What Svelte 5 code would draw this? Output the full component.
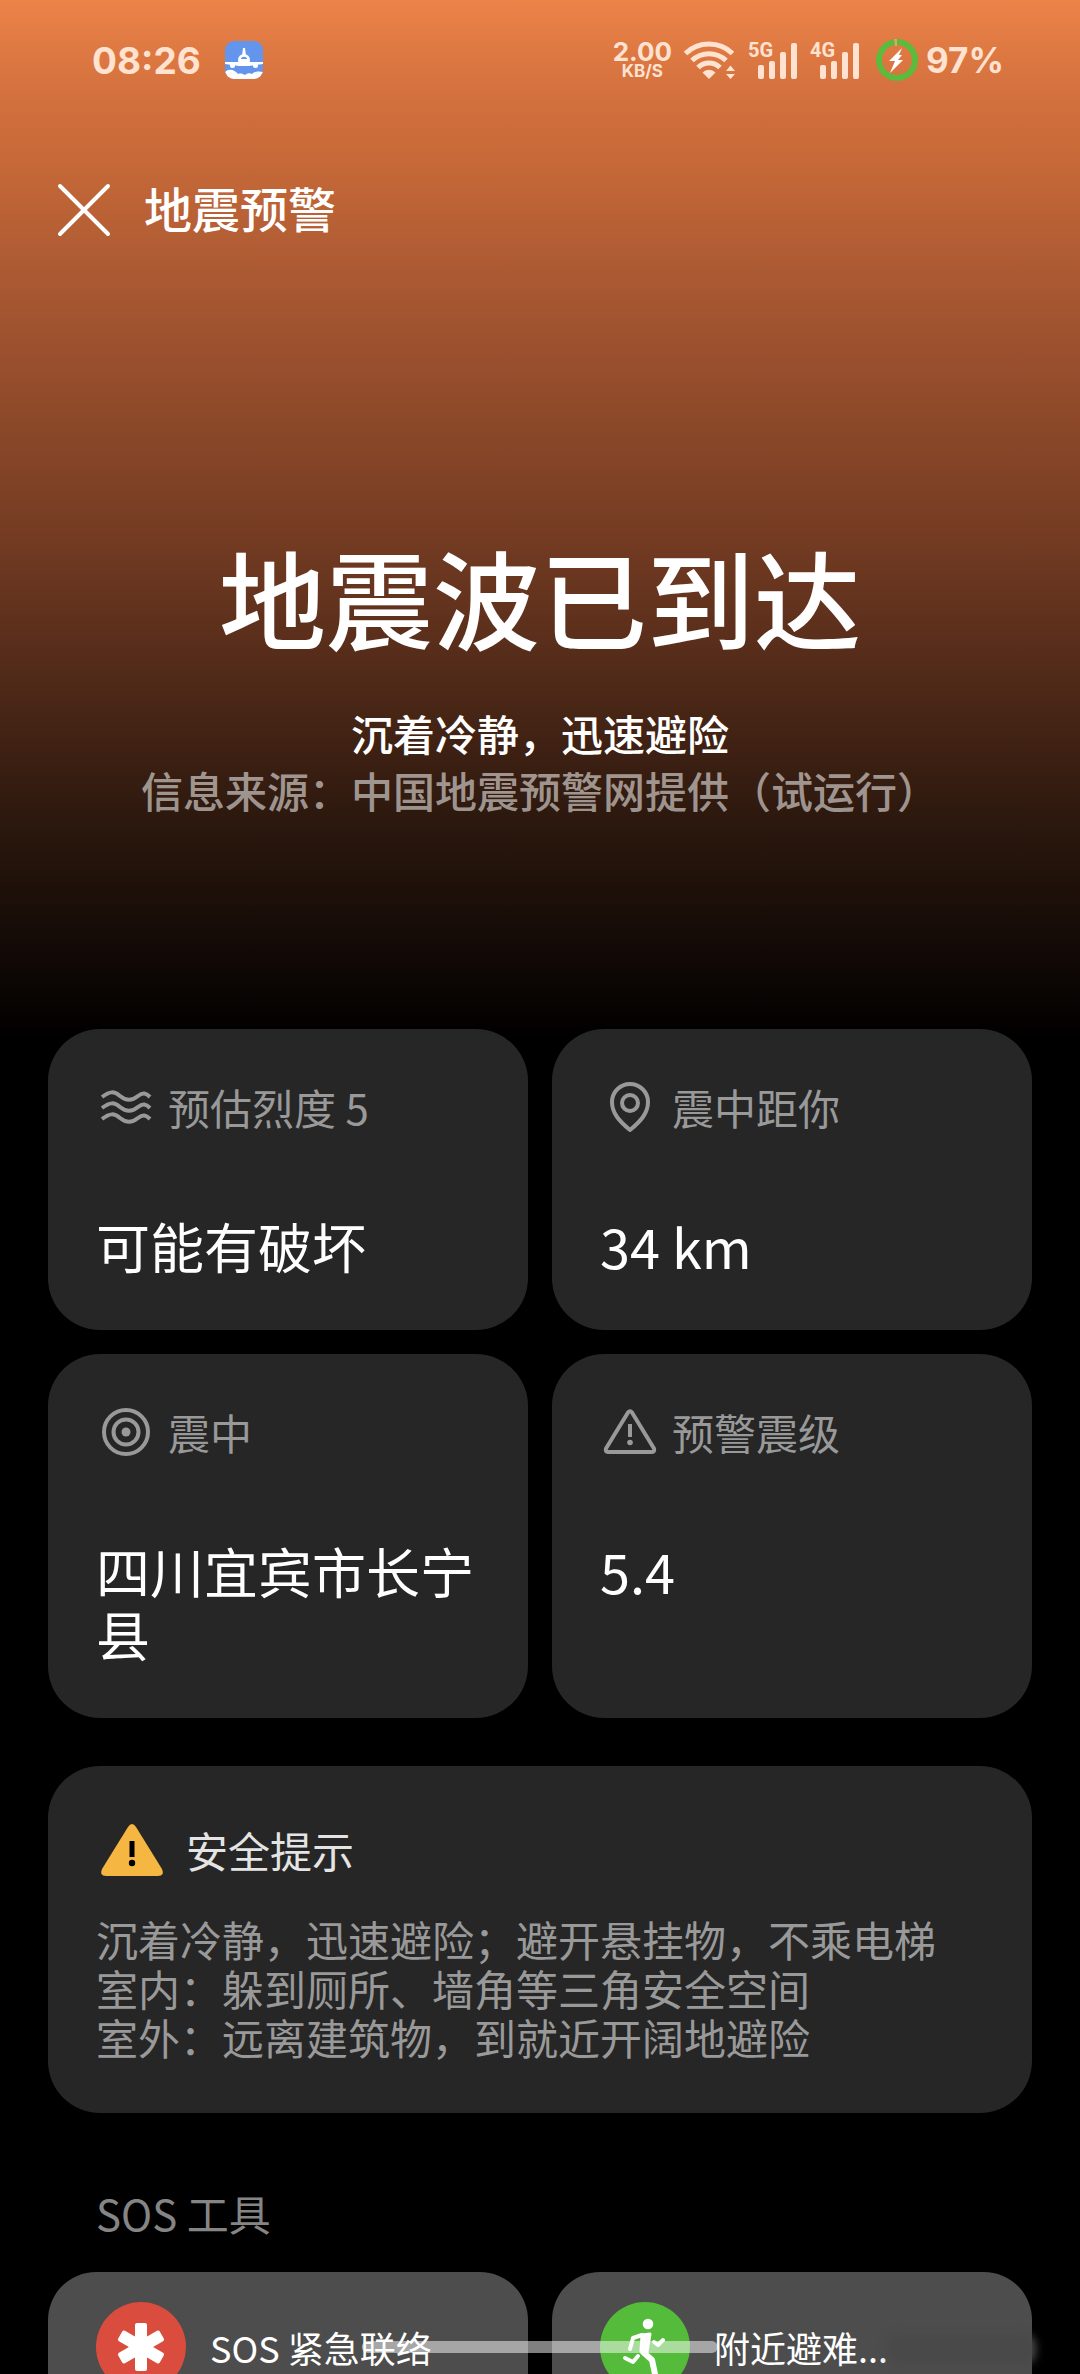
<script lang="ts">
  type IconName = "waves" | "pin" | "target" | "warning";

  const facts: { icon: IconName; label: string; value: string }[] = [
    { icon: "waves", label: "预估烈度 5", value: "可能有破坏" },
    { icon: "pin", label: "震中距你", value: "34 km" },
    { icon: "target", label: "震中", value: "四川宜宾市长宁县" },
    { icon: "warning", label: "预警震级", value: "5.4" },
  ];

  const tips = [
    "沉着冷静，迅速避险；避开悬挂物，不乘电梯",
    "室内：躲到厕所、墙角等三角安全空间",
    "室外：远离建筑物，到就近开阔地避险",
  ].join("\n");

  const networks = ["5G", "4G"];
</script>

<div class="screen">
  <div class="status-bar">
    <div class="status-side">
      <span class="clock">08:26</span>
      <svg class="app-icon" viewBox="0 0 38 38" aria-hidden="true">
        <defs>
          <clipPath id="app-shape"><rect width="38" height="38" rx="9" /></clipPath>
        </defs>
        <g clip-path="url(#app-shape)">
          <rect width="38" height="38" fill="#6495ed" />
          <g fill="#fff">
            <path d="M18 7h2l1 8h-4z" />
            <circle cx="19" cy="19" r="6" />
            <path d="M0 21h38v2l-14 2H14L0 23z" />
            <rect x="5" y="22" width="5" height="5" rx="2" />
            <rect x="28" y="22" width="5" height="5" rx="2" />
            <path d="M0 31c4-4 10-2 13 2 3-1 5 0 7 1 2-2 5-2 7-1 3-3 8-3 11-2v7H0z" />
          </g>
          <path d="M16 18c0-3 6-3 6 0z" fill="#6495ed" />
        </g>
      </svg>
    </div>

    <div class="status-side status-right">
      <div class="speed">
        <span class="speed-value">2.00</span>
        <span class="speed-unit">KB/S</span>
      </div>
      <svg class="wifi" viewBox="0 0 52 38" aria-hidden="true">
        <g fill="none" stroke="currentColor" stroke-width="5">
          <path d="M1.500 12.500a34 34 0 0 1 47 0" />
          <path d="M8 19.500a24.500 24.500 0 0 1 34 0" />
          <path d="M14 26.500a15.500 15.500 0 0 1 22 0" />
        </g>
        <path d="M18.500 31.500a9 9 0 0 1 13 0L25 38z" fill="currentColor" />
        <path d="M42 30l4.500-5.500L51 30zM42 33l4.500 5L51 33z" fill="currentColor" />
      </svg>
      {#each networks as network (network)}
        <div class="network">
          <span class="network-name">{network}</span>
          <svg class="bars" viewBox="0 0 40 37" aria-hidden="true">
            <g fill="currentColor">
              <rect x="0" y="23" width="6" height="14" rx="2" />
              <rect x="11" y="19" width="6" height="18" rx="2" />
              <rect x="22" y="10" width="6" height="27" rx="2" />
              <rect x="33" y="1" width="6" height="36" rx="2" />
            </g>
          </svg>
        </div>
      {/each}
      <div class="battery">
        <svg viewBox="0 0 42 42" aria-hidden="true">
          <circle cx="21" cy="21" r="18" fill="none" stroke="#5cba3c" stroke-width="6" />
          <path d="M18 0h3v7h-2z" fill="#d6a869" />
          <path d="M26 9L13 22h6l-5 12 13-13h-5l4-5h-3z" fill="#fff" />
        </svg>
        <span>97%</span>
      </div>
    </div>
  </div>

  <header>
    <button class="close" type="button" aria-label="关闭">
      <svg viewBox="0 0 60 60" aria-hidden="true">
        <path d="M6 6l48 48M54 6L6 54" fill="none" stroke="currentColor" stroke-width="4" stroke-linecap="round" />
      </svg>
    </button>
    <h1>地震预警</h1>
  </header>

  <section class="hero">
    <h2>地震波已到达</h2>
    <p>沉着冷静，迅速避险</p>
    <p class="source">信息来源：中国地震预警网提供（试运行）</p>
  </section>

  <main>
    <div class="grid">
      {#each facts as fact (fact.label)}
        <article class="card">
          <div class="card-head">
            <svg class="fact-icon" viewBox="0 0 60 60" fill="none" stroke="currentColor" stroke-width="4" aria-hidden="true">
              {#if fact.icon === "waves"}
                <path d="M6 20c8-6 12-6 18-1s12 5 18 0c5-4 8-3 12 1" />
                <path d="M6 31c8-6 12-6 18-1s12 5 18 0c5-4 8-3 12 1" />
                <path d="M6 42c8-6 12-6 18-1s12 5 18 0c5-4 8-3 12 1" />
              {:else if fact.icon === "pin"}
                <path d="M30 53C19 44 12 36 12 25a18 18 0 0 1 36 0c0 11-7 19-18 28z" stroke-linejoin="round" />
                <circle cx="30" cy="26" r="8" />
              {:else if fact.icon === "target"}
                <circle cx="30" cy="30" r="22" />
                <circle cx="30" cy="30" r="12.500" />
                <circle cx="30" cy="30" r="4.500" fill="currentColor" stroke="none" />
              {:else}
                <path d="M28 10.500q2-2.500 4 0l22 36q1 3.500-2 3.500H8q-3 0-2-3.500z" stroke-linejoin="round" />
                <path d="M30 22v13" />
                <circle cx="30" cy="40.500" r="2.800" fill="currentColor" stroke="none" />
              {/if}
            </svg>
            <span>{fact.label}</span>
          </div>
          <p class="value">{fact.value}</p>
        </article>
      {/each}
    </div>

    <section class="card tips">
      <div class="tips-head">
        <svg class="alert" viewBox="0 0 72 72" aria-hidden="true">
          <path d="M32 11q4-6 8 0l26 42q3 7-4 7H10q-7 0-4-7z" fill="#f5b642" />
          <path d="M33.500 25h5v16h-5z" />
          <circle cx="36" cy="47" r="3.200" />
        </svg>
        <h3>安全提示</h3>
      </div>
      <p>{tips}</p>
    </section>

    <h3 class="section-title">SOS 工具</h3>

    <div class="grid">
      <button class="tool" type="button">
        <svg class="tool-icon" viewBox="0 0 90 90" aria-hidden="true">
          <circle cx="45" cy="45" r="45" fill="#da4c3d" />
          <g fill="#fff">
            <rect x="39" y="21" width="12" height="48" rx="2" />
            <rect x="39" y="21" width="12" height="48" rx="2" transform="rotate(60 45 45)" />
            <rect x="39" y="21" width="12" height="48" rx="2" transform="rotate(120 45 45)" />
          </g>
        </svg>
        <span>SOS 紧急联络</span>
      </button>
      <button class="tool" type="button">
        <svg class="tool-icon" viewBox="0 0 90 90" aria-hidden="true">
          <circle cx="45" cy="45" r="45" fill="#55bb3a" />
          <circle cx="48" cy="22" r="5.300" fill="#fff" />
          <path d="M42 33l8-1-3 18-6-1z" fill="#fff" stroke="#fff" stroke-width="3" stroke-linejoin="round" />
          <g fill="none" stroke="#fff" stroke-width="4" stroke-linecap="round" stroke-linejoin="round">
            <path d="M42 33l-9 3-3 11" />
            <path d="M54 40l4 3 5-5" />
            <path d="M25 56l8 4 5-6" />
            <path d="M43 50l9 8 3 14" stroke-width="6" />
          </g>
        </svg>
        <span>附近避难...</span>
        <i class="smudge"></i>
      </button>
    </div>
  </main>

  <div class="home-bar"></div>
</div>

<style>
  :global(body) {
    background: #000;
  }

  .screen {
    position: relative;
    height: 100vh;
    overflow: hidden;
    background: linear-gradient(
      #ec8349 0,
      #d4713e 90px,
      #c76938 160px,
      #ac5a33 270px,
      #733b22 540px,
      #2c180e 820px,
      #000 1040px
    );
    color: #fff;
    font-family: "Noto Sans CJK SC", sans-serif;
  }

  h1,
  h2,
  h3,
  p {
    margin: 0;
  }

  button {
    border: 0;
    color: inherit;
    font-family: inherit;
  }

  .status-bar,
  .status-side {
    display: flex;
    align-items: center;
  }

  .status-bar {
    justify-content: space-between;
    height: 120px;
    padding: 0 76px 0 92px;
    color: #ffe2d0;
    font-family: Inter, sans-serif;
    font-weight: 700;
  }

  .status-side {
    gap: 24px;
  }

  .status-right {
    gap: 12px;
  }

  .clock {
    font-size: 37px;
  }

  .app-icon {
    width: 38px;
    height: 38px;
  }

  .speed {
    display: flex;
    flex-direction: column;
    align-items: center;
  }

  .speed-value {
    font-size: 26px;
    line-height: 22px;
  }

  .speed-unit {
    font-size: 17px;
    line-height: 16px;
  }

  .wifi {
    width: 52px;
    height: 38px;
  }

  .network {
    position: relative;
    padding-left: 10px;
  }

  .network-name {
    position: absolute;
    top: 0;
    left: 0;
    font-family: Roboto, sans-serif;
    font-size: 20px;
    line-height: 16px;
  }

  .bars {
    display: block;
    width: 40px;
    height: 37px;
  }

  .battery {
    display: flex;
    align-items: center;
    gap: 8px;
    margin-left: 4px;
    font-size: 35px;
  }

  .battery svg {
    width: 42px;
    height: 42px;
  }

  header {
    display: flex;
    align-items: center;
    gap: 30px;
    height: 180px;
    padding: 0 54px;
  }

  .close {
    width: 60px;
    height: 60px;
    padding: 0;
    background: none;
  }

  h1 {
    padding-bottom: 6px;
    font-size: 48px;
    font-weight: 500;
    line-height: 60px;
  }

  .hero {
    padding: 226px 48px 211px;
    text-align: center;
  }

  .hero h2 {
    margin-bottom: 38px;
    font-size: 107px;
    font-weight: 500;
    line-height: 140px;
  }

  .hero p {
    font-size: 42px;
    font-weight: 500;
    line-height: 57px;
  }

  .hero .source {
    color: rgba(255, 255, 255, 0.55);
  }

  main {
    padding: 0 48px;
  }

  .grid {
    display: grid;
    grid-template-columns: 1fr 1fr;
    gap: 24px;
  }

  .card {
    padding: 48px 48px 53px;
    border-radius: 52px;
    background: #262626;
  }

  .card-head {
    display: flex;
    align-items: center;
    gap: 12px;
    height: 60px;
    color: #999;
    font-size: 42px;
    line-height: 60px;
  }

  .fact-icon {
    width: 60px;
    height: 60px;
  }

  .value {
    margin-top: 77px;
    font-size: 54px;
    line-height: 63px;
  }

  .tips {
    margin-top: 48px;
    padding: 50px 48px 52px;
  }

  .tips p {
    color: #999;
    font-size: 42px;
    line-height: 49px;
    white-space: pre-line;
  }

  .tips-head {
    display: flex;
    align-items: center;
    gap: 18px;
    margin-bottom: 26px;
  }

  .alert {
    width: 72px;
    height: 72px;
  }

  h3 {
    font-size: 42px;
    font-weight: 400;
    line-height: 60px;
  }

  .tips-head h3 {
    padding-bottom: 4px;
    color: #e4e4e4;
  }

  .section-title {
    padding: 70px 48px 29px;
    color: #858585;
  }

  .tool {
    position: relative;
    display: flex;
    align-items: center;
    gap: 24px;
    padding: 30px 48px;
    border-radius: 48px;
    background: #4d4d4d;
    font-size: 36px;
    white-space: nowrap;
  }

  .tool-icon {
    width: 90px;
    height: 90px;
  }

  .smudge {
    position: absolute;
    right: -4px;
    bottom: 58px;
    width: 150px;
    height: 30px;
    border-radius: 12px;
    background: #494949;
    filter: blur(4px);
  }

  .home-bar {
    position: absolute;
    bottom: 21px;
    left: 50%;
    width: 33%;
    height: 12px;
    border-radius: 6px;
    background: rgba(255, 255, 255, 0.5);
    transform: translateX(-50%);
  }
</style>
